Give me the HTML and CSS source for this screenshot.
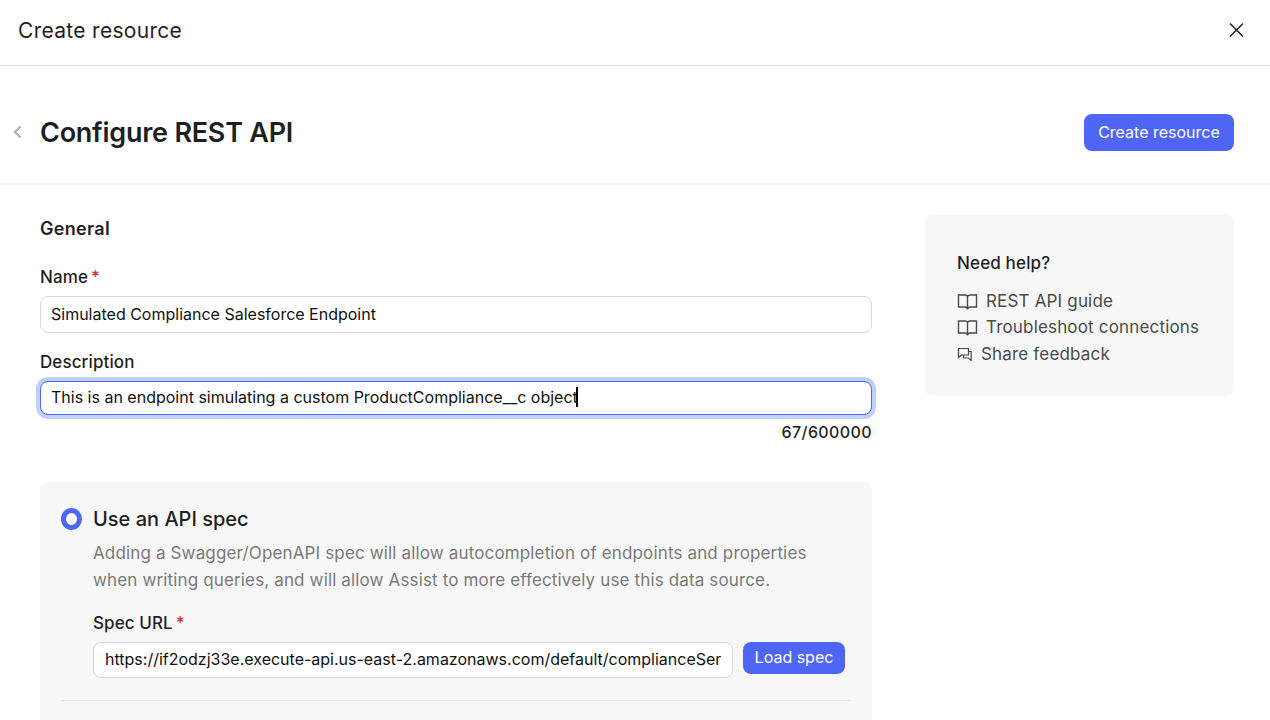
FILE: index.html
```
<!DOCTYPE html>
<html lang="en">
<head>
	<meta charset="utf-8">
	<title>Create resource</title>
	<link rel="stylesheet" href="styles.css">
</head>
<body>
	<header class="modal-header">
		<h1 class="modal-title">Create resource</h1>
		<svg class="close" width="16" height="16" viewBox="0 0 16 16"><path d="M2 1.500l13 13M15 1.500l-13 13"/></svg>
	</header>

	<div class="page-header">
		<svg class="back" width="10" height="14" viewBox="0 0 10 14"><path d="M8.500 1.500L3 7l5.500 5.500"/></svg>
		<h2 class="page-title">Configure REST API</h2>
		<button class="btn btn-create">Create resource</button>
	</div>

	<main class="content">
		<form class="form">
			<h3 class="section-title">General</h3>
			<label class="label">Name<span class="required">*</span></label>
			<input class="input" type="text" value="Simulated Compliance Salesforce Endpoint">

			<label class="label label-desc">Description</label>
			<div class="input input-focus"><span>This is an endpoint simulating a custom ProductCompliance__c object</span><i class="caret"></i></div>
			<div class="counter">67/600000</div>

			<section class="spec">
				<div class="spec-head">
					<span class="radio"></span>
					<h4 class="spec-title">Use an API spec</h4>
				</div>
				<div class="spec-body">
					<p class="spec-text">Adding a Swagger/OpenAPI spec will allow autocompletion of endpoints and properties<br>when writing queries, and will allow Assist to more effectively use this data source.</p>
					<label class="label label-spec">Spec URL<span class="required">*</span></label>
					<div class="spec-row">
						<input class="input input-url" type="text" value="https://if2odzj33e.execute-api.us-east-2.amazonaws.com/default/complianceSer">
						<button class="btn btn-load" type="button">Load spec</button>
					</div>
				</div>
				<hr class="divider">
			</section>
		</form>

		<aside class="help">
			<h3 class="help-title">Need help?</h3>
			<a class="help-link">
				<svg width="21" height="18" viewBox="0 0 21 18"><path d="M10.500 5Q10.500 3 7.800 3H1.500v12h6.300q2.700 0 2.700 2.300 0-2.300 2.700-2.300h6.300V3h-6.300q-2.700 0-2.700 2zV17.500"/></svg>
				<span>REST API guide</span>
			</a>
			<a class="help-link">
				<svg width="21" height="18" viewBox="0 0 21 18"><path d="M10.500 5Q10.500 3 7.800 3H1.500v12h6.300q2.700 0 2.700 2.300 0-2.300 2.700-2.300h6.300V3h-6.300q-2.700 0-2.700 2zV17.500"/></svg>
				<span>Troubleshoot connections</span>
			</a>
			<a class="help-link help-feedback">
				<svg class="chat" width="15" height="14" viewBox="0 0 15 14"><path d="M1.500 1.500h10v6.500h-7L1.500 10.500zM11.500 4.500h2.700V13.500l-2.700-2.500h-5V8"/></svg>
				<span>Share feedback</span>
			</a>
		</aside>
	</main>
</body>
</html>
```
FILE: styles.css
```
* { box-sizing: border-box; }

body {
	margin: 0;
	height: 720px;
	overflow: hidden;
	background: #fff;
	color: #1f1f1f;
	font-family: Inter, "Liberation Sans", sans-serif;
}

h1, h2, h3, h4, p { margin: 0; }
svg {
	display: block;
	flex: none;
	fill: none;
	stroke: #4a4a4a;
	stroke-width: 1.4;
}

.modal-header {
	display: flex;
	justify-content: space-between;
	align-items: center;
	height: 66px;
	padding: 0 26px 5px 18px;
	border-bottom: 1px solid #e4e4e4;
}
.modal-title {
	font-size: 21px;
	font-weight: 400;
	letter-spacing: .3px;
}
.close { stroke: #1f1f1f; stroke-width: 1.5; }

.page-header {
	display: flex;
	align-items: center;
	height: 119px;
	padding: 15px 36px 0 12px;
	border-bottom: 2px solid #f2f2f2;
}
.back { stroke: #aaa; stroke-width: 2; }
.page-title {
	flex: 1;
	margin-left: 18px;
	font-size: 27px;
	font-weight: 600;
	letter-spacing: -.25px;
}

.btn {
	padding: 0;
	border: 0;
	border-radius: 8px;
	background: #4f65f5;
	color: #fff;
	font-family: inherit;
	font-size: 16px;
}
.btn-create { width: 150px; height: 37px; padding-bottom: 1px; }
.btn-load { width: 102px; height: 32px; padding-bottom: 3px; }

.content {
	display: flex;
	align-items: flex-start;
	justify-content: space-between;
	padding: 30px 36px 0 40px;
}
.form { width: 832px; }
.section-title {
	padding-top: 1px;
	font-size: 18px;
	line-height: 26px;
	font-weight: 600;
	letter-spacing: .3px;
}
.label {
	display: block;
	margin-top: 23px;
	font-size: 17px;
	line-height: 24px;
	font-weight: 500;
	letter-spacing: .1px;
}
.required { margin-left: 3px; color: #c9372c; }
.input {
	display: block;
	width: 100%;
	height: 37px;
	margin-top: 7px;
	padding: 0 10px 1px;
	border: 1px solid #d9d9d9;
	border-radius: 8px;
	background: #fff;
	color: #111;
	font-family: inherit;
	font-size: 16px;
}
.label-desc { margin-top: 17px; }
.input-focus {
	display: flex;
	align-items: center;
	height: 34px;
	padding-bottom: 2px;
	border-color: #4f65f5;
	box-shadow: 0 0 0 4px #bfd0fc;
}
.caret { width: 2px; height: 20px; margin-left: -2px; background: #000; }
.counter {
	margin-top: 6px;
	font-size: 16px;
	line-height: 22px;
	font-weight: 500;
	text-align: right;
	letter-spacing: .4px;
}

.spec {
	height: 260px;
	margin-top: 39px;
	padding: 24px 22px 0 21px;
	border-radius: 8px;
	background: #f7f7f7;
}
.spec-head { display: flex; align-items: center; gap: 11px; height: 26px; }
.radio {
	width: 21px;
	height: 22px;
	border: 5px solid #4f65f5;
	border-radius: 50%;
	background: #fff;
}
.spec-title { font-size: 20px; font-weight: 500; }
.spec-body { padding-left: 32px; }
.spec-text {
	margin-top: 8px;
	color: #7a7a7a;
	font-size: 17px;
	line-height: 27px;
	letter-spacing: .145px;
	white-space: nowrap;
}
.label-spec { margin-top: 17px; }
.spec-row { display: flex; gap: 10px; margin-top: 7px; }
.input-url { width: 640px; height: 36px; margin: 0; padding: 0 10px 3px 11px; }
.divider {
	height: 1px;
	margin: 22px 0 0;
	border: 0;
	background: #e4e4e4;
}

.help {
	width: 309px;
	height: 181px;
	padding: 36px 32px 0;
	border-radius: 8px;
	background: #f7f7f7;
}
.help-title {
	margin-bottom: 13px;
	font-size: 17px;
	line-height: 24px;
	font-weight: 500;
	letter-spacing: .15px;
}
.help-link {
	display: flex;
	align-items: center;
	gap: 8px;
	height: 26px;
	color: #4a4a4a;
	font-size: 17px;
	letter-spacing: .17px;
	white-space: nowrap;
}
.help-feedback { height: 28px; gap: 9px; }
.chat { stroke-width: 1.2; }
```
